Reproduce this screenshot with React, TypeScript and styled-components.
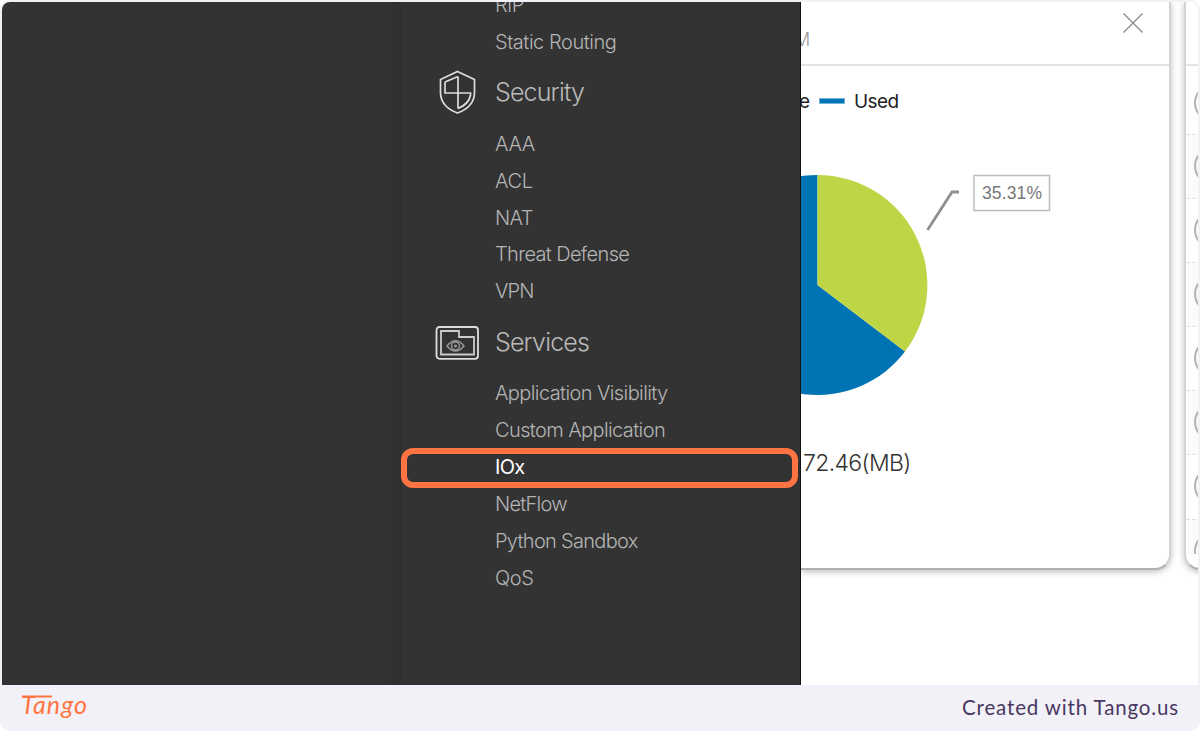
import React from 'react';
import styled, { createGlobalStyle } from 'styled-components';

const GlobalStyle = createGlobalStyle`
  * { box-sizing: border-box; }
  body { margin: 0; background: #fff; font-family: Inter, "Liberation Sans", sans-serif; }
  svg { display: block; }
`;

const Frame = styled.div`
  width: 1200px;
  height: 731px;
  display: flex;
  flex-direction: column;
  padding: 2px 2px 0;
  background: #f3f1f8;
  border-radius: 10px;
  overflow: hidden;
`;

const Screen = styled.main`
  height: 683px;
  display: flex;
  overflow: hidden;
  background: #fff;
  border-radius: 8px 8px 0 0;
`;

const Backdrop = styled.div`
  width: 399px;
  flex: none;
  background: linear-gradient(to right, #333 375px, #2f2f2f 399px);
`;

const Menu = styled.nav`
  width: 400px;
  flex: none;
  height: 683px;
  overflow: hidden;
  background: #333;
  border-right: 1px solid #111;
`;

const MenuInner = styled.div`
  margin-top: -15px;
`;

const Heading = styled.h2<{ $lift: number }>`
  margin: 0;
  height: 65px;
  display: flex;
  align-items: center;
  padding: 0 0 ${(p) => p.$lift}px 34px;
  font-size: 25px;
  font-weight: 350;
  letter-spacing: -0.85px;
  color: #b9b9b9;
`;

const HeadingIcon = styled.span`
  width: 60px;
  flex: none;
`;

const MenuItem = styled.div<{ $spacing?: number; $active?: boolean; $height?: number }>`
  height: ${(p) => p.$height ?? 37}px;
  padding-left: ${(p) => (p.$active ? 88 : 94)}px;
  line-height: ${(p) => (p.$active ? 27 : 37)}px;
  font-size: 20px;
  font-weight: ${(p) => (p.$active ? 400 : 360)};
  letter-spacing: ${(p) => p.$spacing ?? -0.6}px;
  white-space: nowrap;
  color: ${(p) => (p.$active ? '#fff' : '#b5b5b5')};
  ${(p) =>
    p.$active &&
    `
    width: 397px;
    height: 40px;
    margin: -1px 0 -2px;
    border: 6px solid #ff7442;
    border-radius: 12px;
  `}
`;

const Dashboard = styled.section`
  flex: 1;
  display: flex;
  gap: 13px;
  overflow: hidden;
`;

const Card = styled.article`
  width: 369.5px;
  flex: none;
  height: 569px;
  margin-top: -1px;
  background: #fff;
  border-right: 2px solid #d4d4d4;
  border-bottom: 2px solid #b0b0b0;
  border-radius: 0 0 16px 0;
  box-shadow: 0 2px 6px rgba(0, 0, 0, 0.25);
`;

const SideCard = styled(Card)`
  width: 60px;
  border-left: 2px solid #d4d4d4;
  border-radius: 0 0 0 16px;
  overflow: hidden;
`;

const CardHeader = styled.header`
  height: 65px;
  display: flex;
  justify-content: space-between;
  border-bottom: 2px solid #e4e4e4;
  font-size: 18px;
  font-weight: 300;
  color: #999;
`;

const CardTitle = styled.span`
  margin: 28px 0 0 -7px;
`;

const CloseIcon = styled.svg`
  margin: 11px 25px 0 0;
`;

const Legend = styled.div`
  height: 72px;
  display: flex;
  align-items: center;
  padding-bottom: 1px;
  font-size: 19px;
  letter-spacing: -0.6px;
  color: #222;
`;

const LegendEnd = styled.span`
  margin-left: -2px;
  width: 11px;
`;

const Swatch = styled.span`
  width: 26px;
  height: 6px;
  margin: 0 9px 1px;
  background: #0073b4;
  border: 1px solid #75b3d7;
`;

const Total = styled.div`
  margin-top: 31px;
  padding-left: 2px;
  line-height: 30px;
  font-size: 23px;
  font-weight: 300;
  letter-spacing: -0.65px;
  color: #333;
`;

const SideHeader = styled.div`
  height: 65px;
  border-bottom: 2px solid #e4e4e4;
`;

const SideRow = styled.div<{ $shaded: boolean }>`
  height: 64.1px;
  margin-left: 1px;
  padding: 12px 0 0 7px;
  overflow: hidden;
  border-bottom: 1px dashed #d8d8d8;
  background: ${(p) => (p.$shaded ? '#fbfbfb' : '#fff')};
  &:nth-child(2) { height: 69px; padding-top: 18px; }
  &:last-child { height: 34px; border: 0; }
`;

const Ring = styled.span`
  display: block;
  width: 38px;
  height: 38px;
  border: 2px solid #b4b4b4;
  border-radius: 50%;
`;

const Footer = styled.footer`
  height: 46px;
  display: flex;
  justify-content: space-between;
  align-items: center;
  padding: 0 19px 0 17px;
`;

const Credit = styled.span`
  padding-bottom: 2px;
  font-family: Lato, sans-serif;
  font-size: 20.5px;
  letter-spacing: 0.85px;
  color: #483860;
`;

const ShieldIcon = () => (
  <svg width="46" height="46" viewBox="0 0 46 46" fill="none" stroke="#ddd" strokeWidth="1.7">
    <path d="M22.500 2.500L39.500 10.500V24Q39 38 22.500 44Q6 38 5.500 24V10.500Z" />
    <path d="M23 7.500V39.500M10 13L23 7.500M10 13V24H35.500V26Q34 35 23 39.500" />
  </svg>
);

const ServicesIcon = () => (
  <svg width="46" height="36" viewBox="0 -2 46 36" fill="none">
    <rect x="1.500" y="1" width="41.500" height="31.800" rx="3" stroke="#ddd" strokeWidth="1.800" />
    <path d="M6 5H24V11H39V28.500H6Z" stroke="#ccc" strokeWidth="1.800" />
    <path d="M12 20Q20.500 9.500 29 20Q20.500 30 12 20Z" stroke="#999" strokeWidth="1.400" />
    <circle cx="20.500" cy="20" r="4" stroke="#999" strokeWidth="1.400" />
    <circle cx="20.500" cy="20" r="1.500" fill="#999" />
  </svg>
);

const MemoryChart = () => (
  <svg width="300" height="279" viewBox="0 0 300 279">
    <path d="M16.500 147V37A110 110 0 1 0 104 213.500Z" fill="#0073b4" />
    <path d="M16.500 147V37A110 110 0 0 1 104 213.500Z" fill="#bed645" />
    <path d="M126.500 92L151 54H158" fill="none" stroke="#909090" strokeWidth="2.800" />
    <rect x="173" y="37.500" width="75.500" height="35" fill="#fff" stroke="#bdbdbd" strokeWidth="1.500" />
    <text x="181" y="61" fontFamily="Liberation Sans, sans-serif" fontSize="17.500" fill="#777" textLength="60">35.31%</text>
  </svg>
);

const TangoLogo = () => (
  <svg width="74" height="40" viewBox="0 0 74 40" fill="none">
    <path d="M3 8.500H33" stroke="#ff7442" strokeWidth="1.800" />
    <text x="2" y="26" fontFamily="Lato, sans-serif" fontSize="25" fontStyle="italic" fill="#ff7442" textLength="66" lengthAdjust="spacing">Tango</text>
  </svg>
);

export default function App() {
  return (
    <>
      <GlobalStyle />
      <Frame>
        <Screen>
          <Backdrop />
          <Menu>
            <MenuInner>
              <MenuItem>RIP</MenuItem>
              <MenuItem $spacing={-0.45}>Static Routing</MenuItem>
              <Heading $lift={3}>
                <HeadingIcon><ShieldIcon /></HeadingIcon>
                Security
              </Heading>
              <MenuItem $height={36.8} $spacing={-0.4}>AAA</MenuItem>
              <MenuItem $height={36.8} $spacing={-0.4}>ACL</MenuItem>
              <MenuItem $height={36.8}>NAT</MenuItem>
              <MenuItem $height={36.8} $spacing={-0.65}>Threat Defense</MenuItem>
              <MenuItem $height={36.8} $spacing={-0.9}>VPN</MenuItem>
              <Heading $lift={0}>
                <HeadingIcon><ServicesIcon /></HeadingIcon>
                Services
              </Heading>
              <MenuItem>Application Visibility</MenuItem>
              <MenuItem>Custom Application</MenuItem>
              <MenuItem $active $spacing={-0.7}>IOx</MenuItem>
              <MenuItem $spacing={-0.75}>NetFlow</MenuItem>
              <MenuItem $spacing={-0.7}>Python Sandbox</MenuItem>
              <MenuItem $spacing={-0.4}>QoS</MenuItem>
            </MenuInner>
          </Menu>
          <Dashboard>
            <Card>
              <CardHeader>
                <CardTitle>M</CardTitle>
                <CloseIcon width="22" height="22" viewBox="0 0 22 22" stroke="#8c8c8c" strokeWidth="1.400">
                  <path d="M1.500 1.500L20.500 20.500M20.500 1.500L1.500 20.500" />
                </CloseIcon>
              </CardHeader>
              <Legend>
                <LegendEnd>e</LegendEnd>
                <Swatch />
                Used
              </Legend>
              <MemoryChart />
              <Total>72.46(MB)</Total>
            </Card>
            <SideCard>
              <SideHeader />
              {[0, 1, 2, 3, 4, 5, 6, 7].map((row) => (
                <SideRow key={row} $shaded={row % 2 === 1}><Ring /></SideRow>
              ))}
            </SideCard>
          </Dashboard>
        </Screen>
        <Footer>
          <TangoLogo />
          <Credit>Created with Tango.us</Credit>
        </Footer>
      </Frame>
    </>
  );
}
